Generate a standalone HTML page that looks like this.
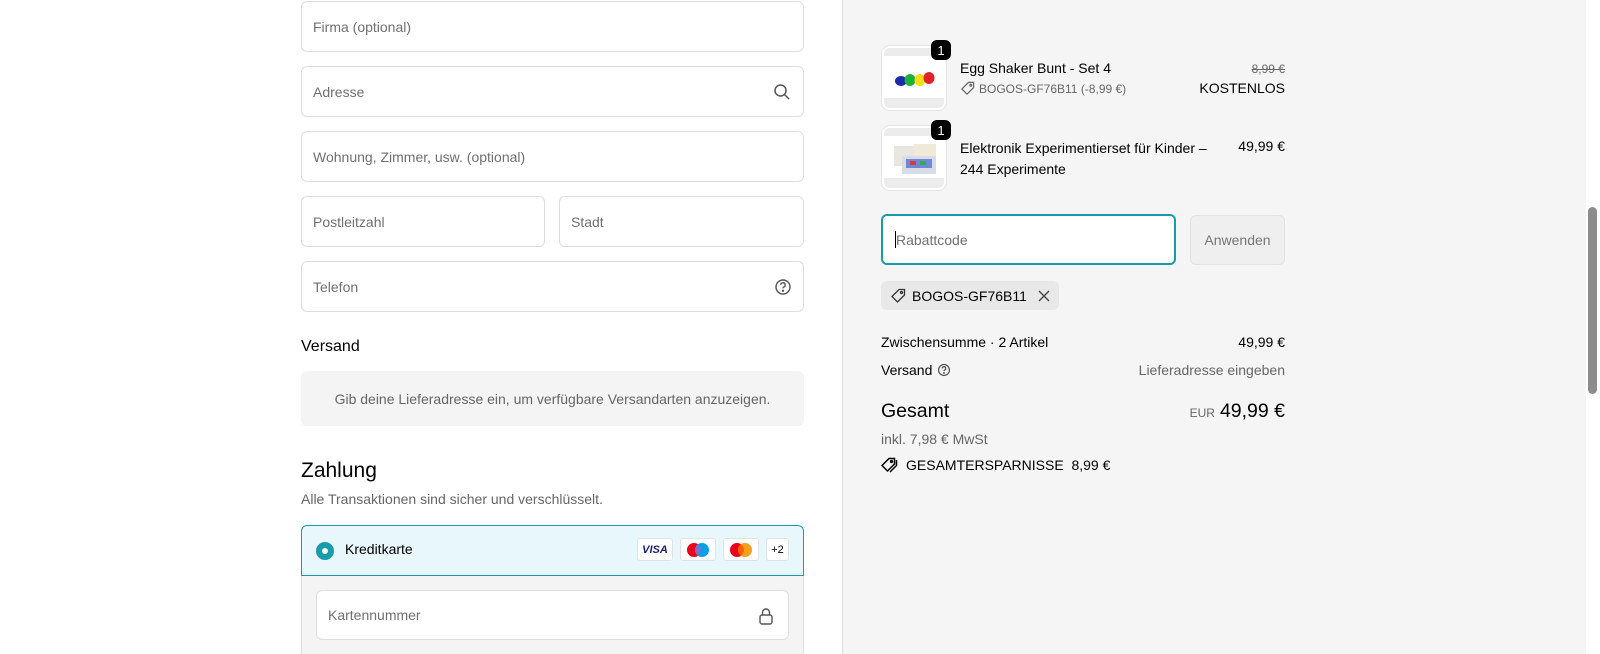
<!DOCTYPE html>
<html><head><meta charset="utf-8"><style>
*{box-sizing:border-box;margin:0;padding:0}
body{width:1600px;height:654px;overflow:hidden;background:#fff;font-family:"Liberation Sans",sans-serif;font-size:14px;color:#000;position:relative}
.a{position:absolute}
.inp{position:absolute;border:1px solid #dedede;border-radius:6px;background:#fff;color:#707070;font-size:14px;padding-left:11px;display:flex;align-items:center}
.rp{position:absolute;left:842px;top:0;width:744px;height:654px;background:#f5f5f5;border-left:1px solid #dedede}
.card{position:absolute;top:538px;width:36px;height:23px;background:#fff;border:1px solid #dfe3e6;border-radius:3px;display:flex;align-items:center;justify-content:center}
.thumb{position:absolute;left:882px;width:64px;height:64px;border-radius:8px;background:#fff;border:2px solid #fff;box-shadow:0 0 0 1px #e6e6e6;overflow:hidden}
.badge{position:absolute;width:20px;height:20px;border-radius:6px;background:#000;color:#fff;font-size:13px;display:flex;align-items:center;justify-content:center}
.r{position:absolute;right:315px;text-align:right}
</style></head><body>
<div class="inp" style="left:301px;top:1px;width:503px;height:51px">Firma (optional)</div>
<div class="inp" style="left:301px;top:66px;width:503px;height:51px">Adresse
<svg class="a" style="right:12px;top:16px" width="18" height="18" viewBox="0 0 18 18" fill="none" stroke="#555" stroke-width="1.5"><circle cx="7.5" cy="7.5" r="5.5"/><path d="M11.5 11.5l4.5 4.5"/></svg></div>
<div class="inp" style="left:301px;top:131px;width:503px;height:51px">Wohnung, Zimmer, usw. (optional)</div>
<div class="inp" style="left:301px;top:196px;width:244px;height:51px">Postleitzahl</div>
<div class="inp" style="left:559px;top:196px;width:245px;height:51px">Stadt</div>
<div class="inp" style="left:301px;top:261px;width:503px;height:51px">Telefon
<svg class="a" style="right:11px;top:16px" width="18" height="18" viewBox="0 0 18 18" fill="none" stroke="#555" stroke-width="1.4"><circle cx="9" cy="9" r="7"/><path d="M6.8 7a2.2 2.2 0 1 1 3 2c-.6.3-.8.7-.8 1.4"/><circle cx="9" cy="12.8" r=".5" fill="#555"/></svg></div>
<div class="a" style="left:301px;top:338px;font-size:16px">Versand</div>
<div class="a" style="left:301px;top:371px;width:503px;height:55px;background:#f4f4f4;border-radius:6px;color:#666;font-size:14px;display:flex;align-items:center;justify-content:center">Gib deine Lieferadresse ein, um verfügbare Versandarten anzuzeigen.</div>
<div class="a" style="left:301px;top:459px;font-size:21px">Zahlung</div>
<div class="a" style="left:301px;top:491px;font-size:14px;color:#666">Alle Transaktionen sind sicher und verschlüsselt.</div>
<div class="a" style="left:301px;top:525px;width:503px;height:51px;background:#e8f7fc;border:1px solid #1a9bab;border-radius:6px 6px 0 0"></div>
<div class="a" style="left:316px;top:542px;width:18px;height:18px;border-radius:50%;background:#1a9bab"><div class="a" style="left:6px;top:6px;width:6px;height:6px;border-radius:50%;background:#fff"></div></div>
<div class="a" style="left:345px;top:541px;font-size:14px">Kreditkarte</div>
<div class="card" style="left:637px"><span style="font-style:italic;font-weight:bold;color:#1a1f71;font-size:11px">VISA</span></div>
<div class="card" style="left:680px"><svg width="24" height="16"><circle cx="8" cy="8" r="7" fill="#eb001b"/><circle cx="16" cy="8" r="7" fill="#00a2e5"/><path d="M12 2.3a7 7 0 0 1 0 11.4a7 7 0 0 1 0-11.4z" fill="#7375cf"/></svg></div>
<div class="card" style="left:723px"><svg width="24" height="16"><circle cx="8" cy="8" r="7" fill="#eb001b"/><circle cx="16" cy="8" r="7" fill="#f79e1b"/><path d="M12 2.3a7 7 0 0 1 0 11.4a7 7 0 0 1 0-11.4z" fill="#ff5f00"/></svg></div>
<div class="card" style="left:766px;width:23px;font-size:11px">+2</div>
<div class="a" style="left:301px;top:576px;width:503px;height:78px;background:#f4f4f4;border-left:1px solid #dedede;border-right:1px solid #dedede"></div>
<div class="inp" style="left:316px;top:590px;width:473px;height:50px">Kartennummer
<svg class="a" style="right:14px;top:16px" width="16" height="18" viewBox="0 0 16 18" fill="none" stroke="#555" stroke-width="1.4"><rect x="2" y="8" width="12" height="9" rx="2"/><path d="M4.5 8V5.5a3.5 3.5 0 0 1 7 0V8"/></svg></div>

<div class="rp"></div>
<div class="thumb" style="top:46px"><div class="a" style="left:0;top:0;width:60px;height:8px;background:#ececec"></div><div class="a" style="left:0;bottom:0;width:60px;height:10px;background:#ececec"></div>
<svg class="a" style="left:8px;top:22px" width="46" height="18"><ellipse cx="9" cy="11" rx="6" ry="5" fill="#1c2aa8"/><ellipse cx="18" cy="10" rx="5.5" ry="6" fill="#1bb13a"/><ellipse cx="28" cy="10" rx="5.5" ry="6" fill="#f1e019"/><ellipse cx="37" cy="8" rx="5.5" ry="6" fill="#e3212a"/></svg></div>
<div class="badge" style="left:931px;top:40px">1</div>
<div class="thumb" style="top:126px"><div class="a" style="left:0;top:0;width:60px;height:8px;background:#ececec"></div><div class="a" style="left:0;bottom:0;width:60px;height:10px;background:#ececec"></div>
<svg class="a" style="left:8px;top:14px" width="48" height="34"><rect x="2" y="4" width="30" height="20" fill="#e8e6de"/><rect x="22" y="2" width="22" height="16" fill="#efe9d8"/><rect x="10" y="14" width="34" height="18" fill="#d9dbe6"/><rect x="14" y="17" width="26" height="9" fill="#6c8ad6"/><rect x="18" y="19" width="6" height="4" fill="#d63c3c"/><rect x="28" y="19" width="6" height="4" fill="#3ca84b"/></svg></div>
<div class="badge" style="left:931px;top:120px">1</div>

<div class="a" style="left:960px;top:60px;font-size:14px">Egg Shaker Bunt - Set 4</div>
<div class="a" style="left:960px;top:81px;font-size:12px;color:#666;display:flex;align-items:center"><svg width="15" height="15" viewBox="0 0 16 16" fill="none" stroke="#666" stroke-width="1.3" style="margin-right:4px"><path d="M9 1.5h5.5V7L7.5 14 2 8.5z"/><circle cx="11.5" cy="4.5" r="1"/></svg>BOGOS-GF76B11 (-8,99 €)</div>
<div class="r" style="top:62px;font-size:12px;color:#666;text-decoration:line-through">8,99 €</div>
<div class="r" style="top:80px;font-size:14px">KOSTENLOS</div>
<div class="a" style="left:960px;top:138px;font-size:14px;line-height:21px;width:255px">Elektronik Experimentierset für Kinder – 244 Experimente</div>
<div class="r" style="top:138px;font-size:14px">49,99 €</div>

<div class="a" style="left:881px;top:214px;width:295px;height:51px;background:#fff;border:2px solid #1a9bab;border-radius:6px;color:#707070;font-size:14px;padding-left:12px;display:flex;align-items:center"><span style="display:inline-block;width:1px;height:17px;background:#000"></span>Rabattcode</div>
<div class="a" style="left:1190px;top:215px;width:95px;height:50px;background:#efefef;border:1px solid #e3e3e3;border-radius:6px;color:#777;font-size:14px;display:flex;align-items:center;justify-content:center">Anwenden</div>

<div class="a" style="left:881px;top:281px;width:178px;height:29px;background:#e8e8e8;border-radius:6px;display:flex;align-items:center;padding-left:9px;font-size:14px"><svg width="16" height="16" viewBox="0 0 16 16" fill="none" stroke="#333" stroke-width="1.3" style="margin-right:6px"><path d="M9 1.5h5.5V7L7.5 14 2 8.5z"/><circle cx="11.5" cy="4.5" r="1"/></svg>BOGOS-GF76B11<svg width="14" height="14" viewBox="0 0 14 14" stroke="#444" stroke-width="1.4" style="margin-left:10px"><path d="M2 2l10 10M12 2L2 12"/></svg></div>

<div class="a" style="left:881px;top:334px;font-size:14px">Zwischensumme · 2 Artikel</div>
<div class="r" style="top:334px;font-size:14px">49,99 €</div>
<div class="a" style="left:881px;top:362px;font-size:14px;display:flex;align-items:center">Versand<svg width="14" height="14" viewBox="0 0 18 18" fill="none" stroke="#555" stroke-width="1.6" style="margin-left:5px"><circle cx="9" cy="9" r="7"/><path d="M6.8 7a2.2 2.2 0 1 1 3 2c-.6.3-.8.7-.8 1.4"/><circle cx="9" cy="12.8" r=".5"/></svg></div>
<div class="r" style="top:362px;font-size:14px;color:#666">Lieferadresse eingeben</div>
<div class="a" style="left:881px;top:400px;font-size:19.5px">Gesamt</div>
<div class="r" style="top:400px;font-size:19.5px"><span style="font-size:12px;color:#666;margin-right:5px">EUR</span>49,99 €</div>
<div class="a" style="left:881px;top:431px;font-size:14px;color:#666">inkl. 7,98 € MwSt</div>
<div class="a" style="left:881px;top:457px;font-size:14px;display:flex;align-items:center"><svg width="18" height="16" viewBox="0 0 18 16" fill="none" stroke="#000" stroke-width="1.5" style="margin-right:7px"><path d="M8 1.5h5.5V7L6.5 14 1 8.5z"/><path d="M15.5 3v5.5L9 15"/><circle cx="10.5" cy="4.5" r=".9"/></svg>GESAMTERSPARNISSE&nbsp;&nbsp;8,99 €</div>

<div class="a" style="left:1586px;top:0;width:14px;height:654px;background:#fff"></div>
<div class="a" style="left:1588px;top:207px;width:9px;height:187px;background:#8c8c8c;border-radius:5px"></div>
</body></html>
